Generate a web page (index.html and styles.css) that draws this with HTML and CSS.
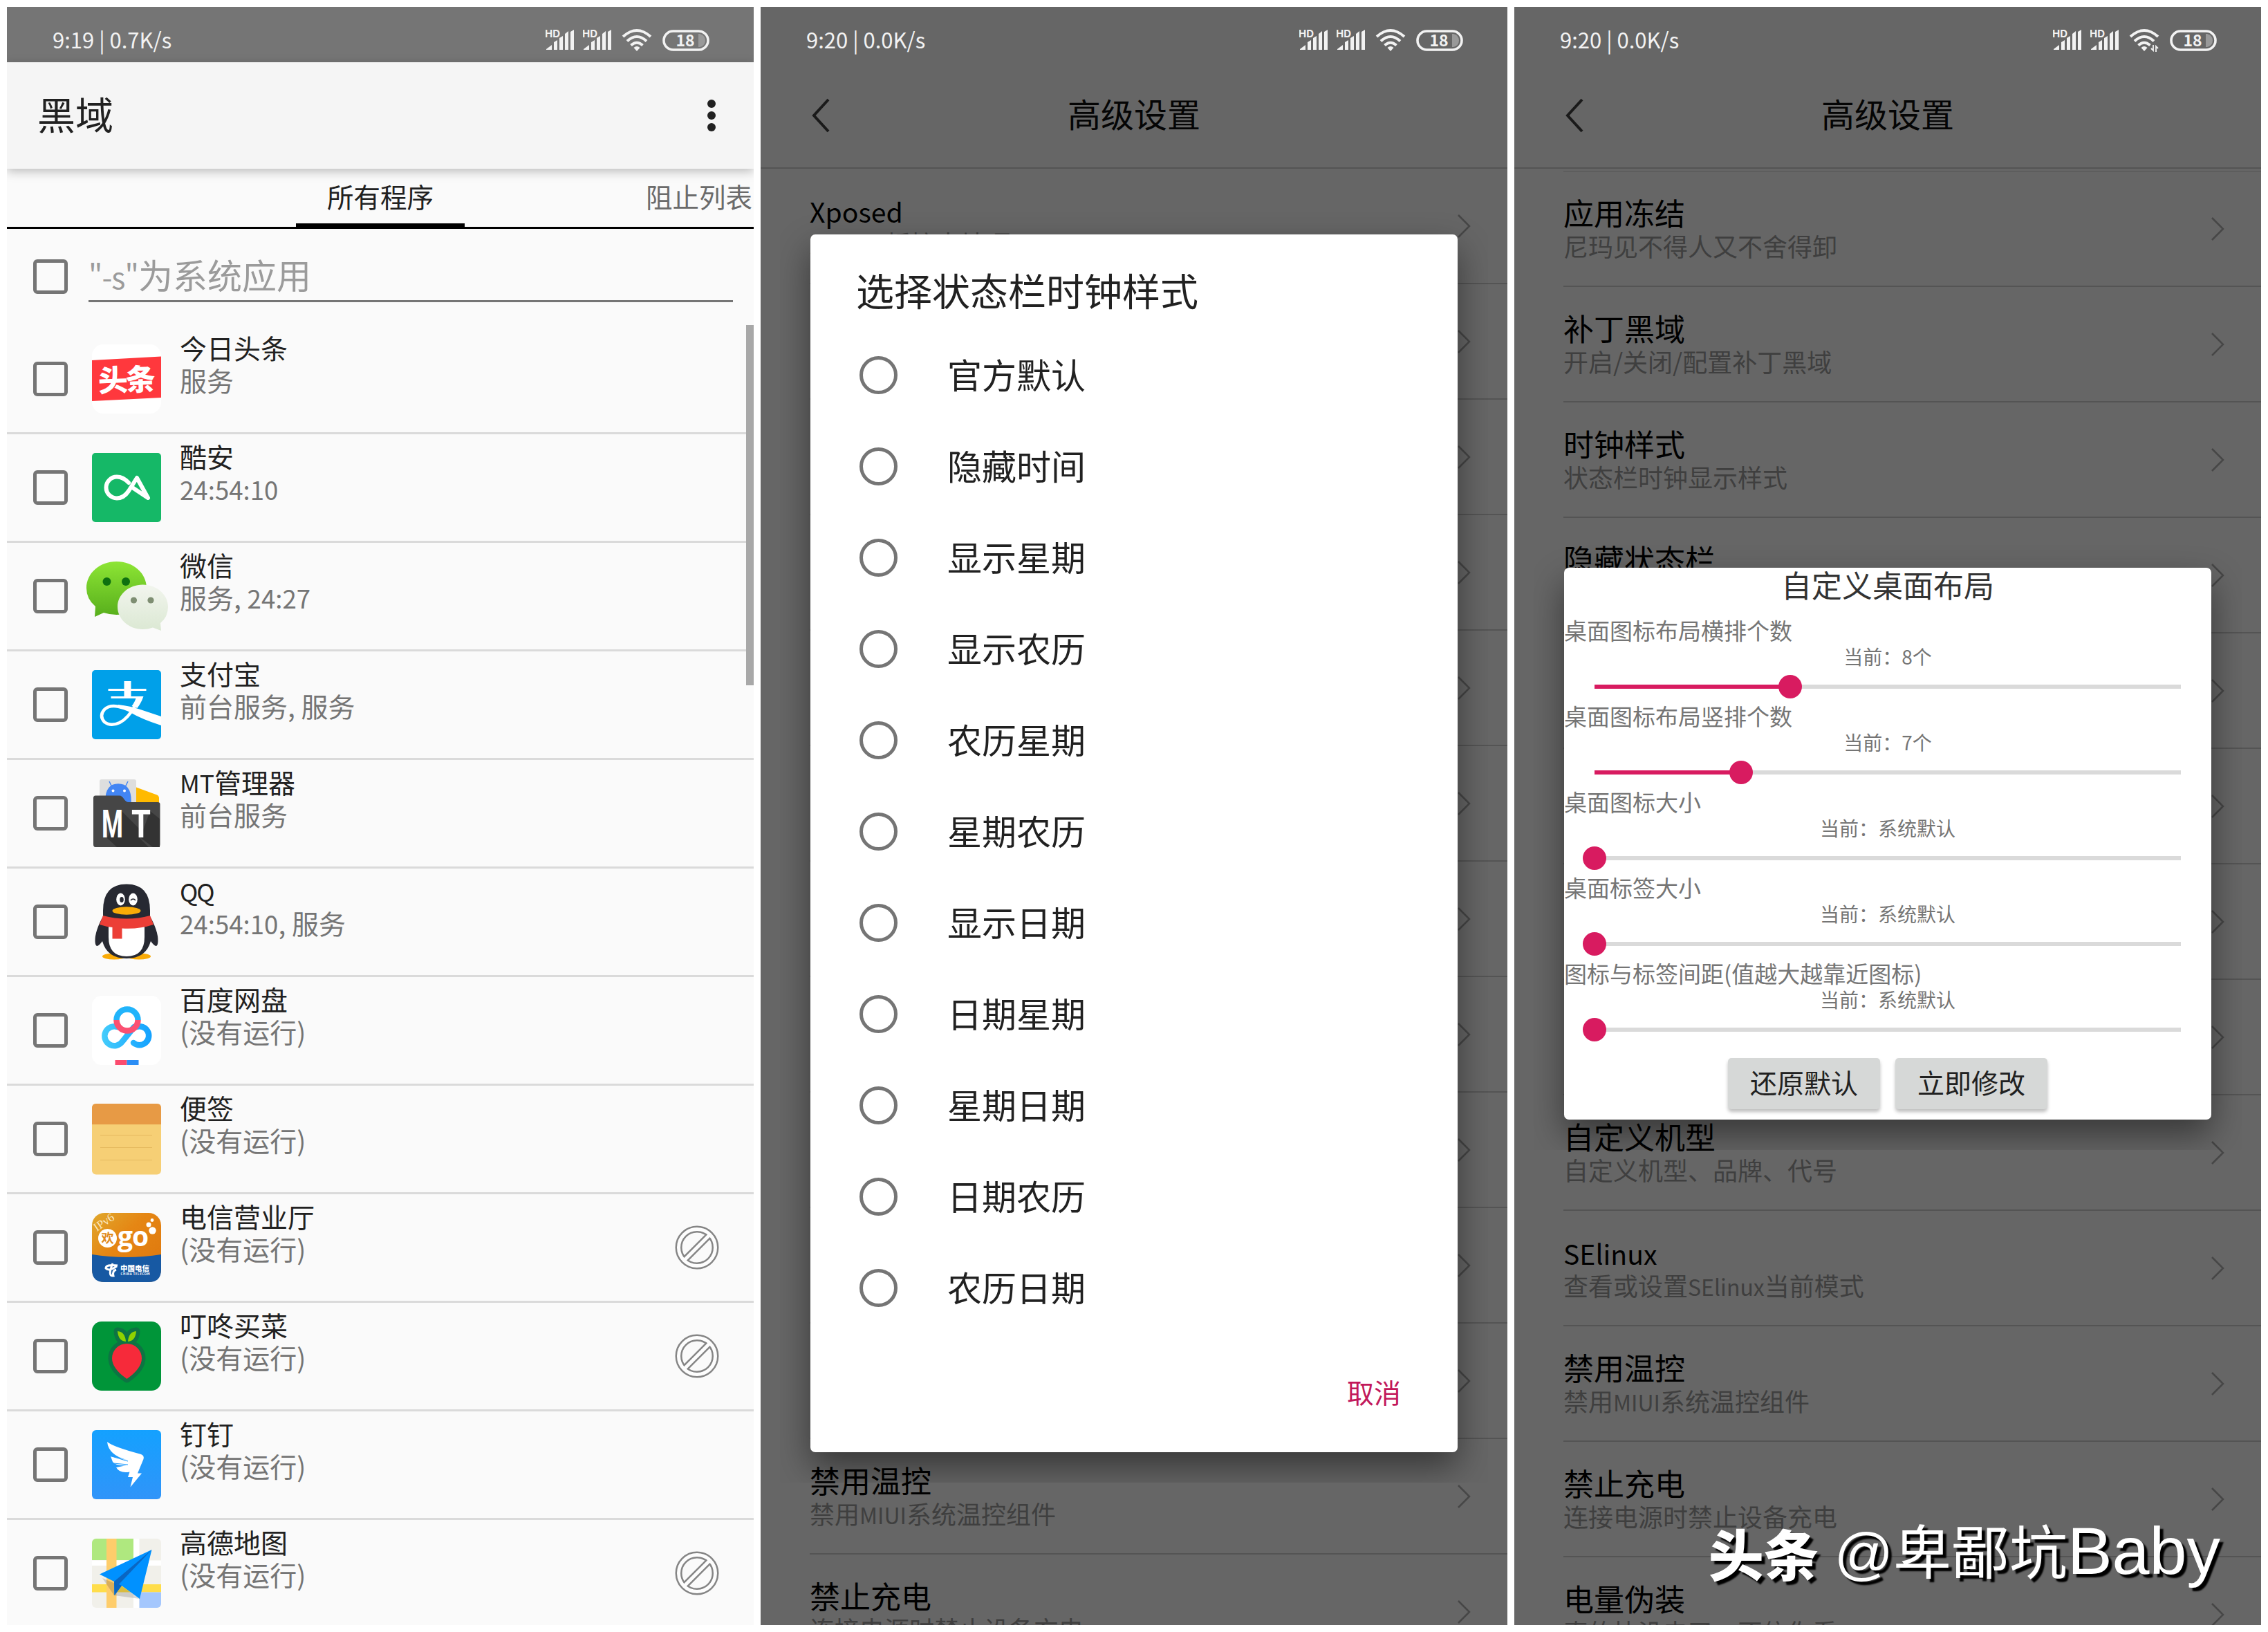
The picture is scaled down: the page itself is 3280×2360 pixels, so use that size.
FILE: index.html
```html
<!DOCTYPE html>
<html lang="zh-CN">
<head>
  <meta charset="UTF-8">
  <meta name="viewport" content="width=device-width, initial-scale=1.0">
  <title>黑域</title>
  <link rel="stylesheet" href="styles.css">
</head>
<body>
  <svg class="defs" width="0" height="0">
    <defs>
      <linearGradient id="gWechat" x1="0" y1="0" x2="0" y2="1"><stop offset="0" stop-color="#8de534"/><stop offset="1" stop-color="#57ae1c"/></linearGradient>
      <linearGradient id="gWechat2" x1="0" y1="0" x2="0" y2="1"><stop offset="0" stop-color="#f2f5ee"/><stop offset="1" stop-color="#dbe8d3"/></linearGradient>
      <linearGradient id="gPan" gradientUnits="userSpaceOnUse" x1="13" y1="0" x2="88" y2="0"><stop offset="0" stop-color="#45cdfb"/><stop offset="1" stop-color="#12a0ff"/></linearGradient>
      <linearGradient id="gGo" x1="0" y1="0" x2="1" y2="1"><stop offset="0" stop-color="#e0a82c"/><stop offset=".4" stop-color="#e58614"/><stop offset="1" stop-color="#dd750c"/></linearGradient>
      <linearGradient id="gDing" x1="0" y1="0" x2="0" y2="1"><stop offset="0" stop-color="#14a1ff"/><stop offset="1" stop-color="#3094f9"/></linearGradient>
    </defs>
    <symbol id="block" viewBox="0 0 64 64">
      <g fill="none" stroke="#858585" stroke-width="10"><circle cx="32" cy="32" r="26.500"/><path d="M14 50L50 14"/></g>
      <g fill="none" stroke="#fdfdfd" stroke-width="5"><circle cx="32" cy="32" r="26.500"/><path d="M14 50L50 14"/></g>
    </symbol>
  </svg>

  <!-- 程序列表 -->
  <div class="phone light">
    <div class="status">
      <span class="clock">9:19 | 0.7K/s</span>
      <div class="status-icons"></div>
    </div>
    <div class="toolbar">
      <h1>黑域</h1>
      <div class="more"><i></i><i></i><i></i></div>
    </div>
    <div class="tabs">
      <span class="tab active">所有程序</span>
      <span class="tab next">阻止列表</span>
    </div>
    <div class="search">
      <i class="check"></i>
      <div class="input"><em>"-s"</em>为系统应用</div>
    </div>
    <ul class="apps">
      <li>
        <i class="check"></i>
        <svg class="icon" viewBox="0 0 100 100">
          <rect width="100" height="100" rx="16" fill="#fff"/>
          <path d="M0 23L100 17.500V77L0 82z" fill="#ff383d"/>
          <text x="9" y="67" class="toutiao" textLength="83" transform="rotate(-2 50 50)">头条</text>
        </svg>
        <div class="info"><b>今日头条</b><span>服务</span></div>
      </li>
      <li>
        <i class="check"></i>
        <svg class="icon" viewBox="0 0 100 100">
          <rect width="100" height="100" rx="5" fill="#15b867"/>
          <path d="M53 43Q45 34.500 36 34.500A15.500 15.500 0 0 0 36 65.500Q46 65.500 53 55L65 36L81 65L60 51" fill="none" stroke="#fff" stroke-width="6" stroke-linejoin="round" stroke-linecap="round"/>
        </svg>
        <div class="info"><b>酷安</b><span><em>24:54:10</em></span></div>
      </li>
      <li>
        <i class="check"></i>
        <svg class="icon" viewBox="0 0 100 100">
          <path d="M35.500 0C60 0 79 17 79 38.500S60 77 35.500 77Q26 77 17 74L4 80L5 65Q-8 54-8 38.500C-8 17 11 0 35.500 0z" fill="url(#gWechat)"/>
          <circle cx="21.500" cy="29" r="6" fill="#0f7010"/><circle cx="49" cy="29" r="6" fill="#0f7010"/>
          <path d="M73.500 33.500C94 33.500 110 48 110 65.500Q110 80 99 89L100 100L88 95.500Q81 98 73.500 98C53 98 37 83 37 65.500S53 33.500 73.500 33.500z" fill="url(#gWechat2)"/>
          <circle cx="60.500" cy="56" r="4.600" fill="#7e8e72"/><circle cx="85" cy="56" r="4.600" fill="#7e8e72"/>
        </svg>
        <div class="info"><b>微信</b><span>服务, <em>24:27</em></span></div>
      </li>
      <li>
        <i class="check"></i>
        <svg class="icon" viewBox="0 0 100 100">
          <rect width="100" height="100" rx="5" fill="#00a0e9"/>
          <path d="M46.500 16h10v11h22v3h-22v8h18q-3 9-9 17l-8-3q4-5 6-11h-36v-3h19v-8h-23v-3h23z" fill="#fff"/>
          <path d="M62 52Q52 70 40 76Q27 82 18 75Q10 66 18 57Q27 48 46 55Q70 64 100 74" fill="none" stroke="#fff" stroke-width="4.500"/>
          <path d="M38 50Q56 52 70 57L100 67V80Q72 71 55 61Q46 55 38 54z" fill="#fff"/>
        </svg>
        <div class="info"><b>支付宝</b><span>前台服务, 服务</span></div>
      </li>
      <li>
        <i class="check"></i>
        <svg class="icon" viewBox="0 0 100 100">
          <rect x="11" y="1" width="53" height="50" rx="3" fill="#dedede"/>
          <path d="M64 12.500L94 23.500Q97 25 97 28V36H64z" fill="#ffba00"/>
          <path d="M20 32Q20 8 38 8T56 32V40H20zM29 12l-4-8M48 12l4-8" fill="#4285f4" stroke="#4285f4" stroke-width="1.500"/>
          <circle cx="30.500" cy="17.500" r="2" fill="#fff"/><circle cx="47" cy="17.500" r="2" fill="#fff"/>
          <path d="M5 24.500H40Q43 24.500 46 29Q49 34 53 34H95Q98.500 34 98.500 37V95Q98.500 99 95 99H5Q2 99 2 95V28Q2 24.500 5 24.500z" fill="#464646"/>
          <path d="M42 46L74 78L68 85L82 99H36L22 86zM84 47L98 58V99H88L70 85z" fill="#333"/>
          <text x="14" y="85" class="mt" textLength="31" lengthAdjust="spacingAndGlyphs">M</text>
          <text x="57" y="85" class="mt" textLength="28" lengthAdjust="spacingAndGlyphs">T</text>
        </svg>
        <div class="info"><b><em>MT</em>管理器</b><span>前台服务</span></div>
      </li>
      <li>
        <i class="check"></i>
        <svg class="icon" viewBox="0 0 100 100">
          <ellipse cx="32" cy="100" rx="17" ry="4.500" fill="#faab07"/><ellipse cx="68" cy="100" rx="17" ry="4.500" fill="#faab07"/>
          <path d="M16 34Q16-4.500 50-4.500T84 34V42Q96 64 95.500 78Q95 92 85 78Q78 103 50 103T15 78Q5 92 4.500 78Q4 64 16 42z" fill="#272932"/>
          <path d="M24 55H76V72Q76 100 50 100T24 72z" fill="#fff"/>
          <ellipse cx="41.500" cy="17.500" rx="6.300" ry="9" fill="#fff"/><ellipse cx="59.500" cy="17.500" rx="6.300" ry="9" fill="#fff"/>
          <ellipse cx="43" cy="18" rx="2.800" ry="4" fill="#272932"/><path d="M56 19q3.500-4 7 0" fill="none" stroke="#272932" stroke-width="1.600"/>
          <ellipse cx="50" cy="34" rx="20.500" ry="5.700" fill="#faab07"/>
          <path d="M16 41Q50 50 84 41L89 54Q68 61 43.500 59.500V74.500H29.500V58Q20 57 11 54z" fill="#ec3e36"/>
        </svg>
        <div class="info"><b><em class="qq">QQ</em></b><span><em>24:54:10</em>, 服务</span></div>
      </li>
      <li>
        <i class="check"></i>
        <svg class="icon" viewBox="0 0 100 100">
          <rect width="100" height="100" rx="14" fill="#fff"/>
          <g fill="none" stroke-width="8.500">
            <path d="M61 45L44 66A14 14 0 1 1 37 45M60 68A13.500 13.500 0 1 0 64 45" stroke="url(#gPan)" stroke-linecap="round"/>
            <path d="M35.500 35A15.500 15.500 0 0 1 66.500 35" stroke="#21b4fb"/>
            <path d="M35.500 35A15.500 15.500 0 1 0 66.500 35" stroke="#fb5072"/>
          </g>
          <path d="M33.500 93h17v7h-17z" fill="#fb4b6e"/><path d="M50.500 93h17v7h-17z" fill="#2a8df5"/>
        </svg>
        <div class="info"><b>百度网盘</b><span>(没有运行)</span></div>
      </li>
      <li>
        <i class="check"></i>
        <svg class="icon" viewBox="0 0 100 100">
          <rect y="-1" width="100" height="102.500" rx="6" fill="#f6cf75"/>
          <path d="M0 29V5Q0-1 6-1H94Q100-1 100 5V29z" fill="#e79a45"/>
          <path d="M12 44.500h75M12 62.500h75M12 80.500h75" stroke="#e5b95e" stroke-width="1.200"/>
        </svg>
        <div class="info"><b>便签</b><span>(没有运行)</span></div>
      </li>
      <li>
        <i class="check"></i>
        <svg class="icon" viewBox="0 0 100 100">
          <rect width="100" height="100" rx="18" fill="url(#gGo)"/>
          <path d="M0 60Q50 68 100 60V82Q100 100 82 100H18Q0 100 0 82z" fill="#1759a3"/>
          <text x="7" y="27" class="ipv" transform="rotate(-34 7 27)">IPv6</text>
          <circle cx="22.500" cy="36.500" r="13.500" fill="#fff"/>
          <text x="13.500" y="43" class="huan">欢</text>
          <text x="37" y="48" class="go">go</text>
          <circle cx="87.500" cy="25.500" r="5.200" fill="#fff"/><circle cx="82" cy="17" r="3.500" fill="#fff"/><circle cx="87" cy="10.500" r="2.400" fill="#fff"/>
          <path d="M37 76Q20 74 20 80Q24 85 36 77M30 73Q22 92 31 91Q29 84 35 82" fill="none" stroke="#fff" stroke-width="3"/>
          <text x="41" y="84" class="tele">中国电信</text>
          <text x="41.500" y="90" class="tele-en" textLength="42">CHINA TELECOM</text>
        </svg>
        <div class="info"><b>电信营业厅</b><span>(没有运行)</span></div>
        <svg class="block"><use href="#block"/></svg>
      </li>
      <li>
        <i class="check"></i>
        <svg class="icon" viewBox="0 0 100 100">
          <rect width="100" height="100" rx="14" fill="#009539"/>
          <g stroke="#0d7443" stroke-width="11" stroke-linejoin="round" fill="#0d7443">
            <path d="M50.500 83Q29 68 29 53A21.500 21 0 0 1 72 53Q72 68 50.500 83z"/>
            <path d="M49 29Q38 28 37 14Q48 15 49 29zM52 29Q53 15 64 14Q63 28 52 29z"/>
          </g>
          <path d="M50.500 83Q29 68 29 53A21.500 21 0 0 1 72 53Q72 68 50.500 83z" fill="#f62a3a"/>
          <path d="M49 29Q38 28 37 14Q48 15 49 29zM52 29Q53 15 64 14Q63 28 52 29z" fill="#8fd300"/>
        </svg>
        <div class="info"><b>叮咚买菜</b><span>(没有运行)</span></div>
        <svg class="block"><use href="#block"/></svg>
      </li>
      <li>
        <i class="check"></i>
        <svg class="icon" viewBox="0 0 100 100">
          <rect width="100" height="100" rx="6" fill="url(#gDing)"/>
          <path d="M22 17Q30 24 71 35Q76 37 74.500 42L66 62.500H72L55.500 82.500L59 68H52L54.500 60.500Q40 63 35 54L50 51Q34 52 30 46L27 38L50 43Q24 36 22 17z" fill="#fff"/>
          <path d="M27 37.500L52 45M31 48L52 50" stroke="#1f9bfc" stroke-width="1.200"/>
        </svg>
        <div class="info"><b>钉钉</b><span>(没有运行)</span></div>
      </li>
      <li>
        <i class="check"></i>
        <svg class="icon map" viewBox="0 0 100 100">
          <rect width="100" height="100" fill="#f1f0ea"/>
          <path d="M0 0h60v31H0z" fill="#afe87f"/>
          <path d="M0 31.500h100v7.500H0zM60 0h8.500v100H60z" fill="#fff"/>
          <path d="M0 66h100v11.500H0z" fill="#ffdd4a"/>
          <path d="M68.500 77.500H100V100H68.500z" fill="#a4c7fd"/>
          <path d="M21 0h14.500v100H21z" fill="#fecd6b"/>
          <path d="M15 57L32 82L69 87L45 70z" fill="#000" opacity=".15"/>
          <path d="M86.500 16L11 51.500L32 62L32.500 82L43 68L69 87z" fill="#0091ff"/>
          <path d="M86.500 16L32 62L39 66zM32 62L32.500 82L43 68L37 65z" fill="#0a66c2"/>
        </svg>
        <div class="info"><b>高德地图</b><span>(没有运行)</span></div>
        <svg class="block"><use href="#block"/></svg>
      </li>
    </ul>
    <div class="scrollbar"></div>
  </div>

  <!-- 时钟样式 -->
  <div class="phone dim">
    <div class="status">
      <span class="clock">9:20 | 0.0K/s</span>
      <div class="status-icons"></div>
    </div>
    <div class="header">
      <svg class="back" viewBox="0 0 28 50"><path d="M25 2L4 25L25 48"/></svg>
      <h2>高级设置</h2>
    </div>
    <ul class="settings" id="settings1"></ul>
    <div class="dialog clock-dialog">
      <h3>选择状态栏时钟样式</h3>
      <ul id="options"></ul>
      <div class="cancel">取消</div>
    </div>
  </div>

  <!-- 桌面布局 -->
  <div class="phone dim">
    <div class="status">
      <span class="clock">9:20 | 0.0K/s</span>
      <div class="status-icons transfer"></div>
    </div>
    <div class="header">
      <svg class="back" viewBox="0 0 28 50"><path d="M25 2L4 25L25 48"/></svg>
      <h2>高级设置</h2>
    </div>
    <ul class="settings scrolled" id="settings2"></ul>
    <div class="dialog layout-dialog">
      <h3>自定义桌面布局</h3>
      <div id="sliders"></div>
      <div class="buttons"><span>还原默认</span><span>立即修改</span></div>
    </div>
    <div class="watermark"><b>头条</b><span>@卑鄙坑<em>Baby</em></span></div>
  </div>

  <script>
    const blank = ["", ""]
    const first = [
      ["Xposed", "Xposed桥接本地项"],
      blank, blank, blank, blank, blank, blank, blank, blank, blank, blank,
      ["禁用温控", "禁用MIUI系统温控组件"],
      ["禁止充电", "连接电源时禁止设备充电"]
    ]
    const second = [
      ["应用冻结", "尼玛见不得人又不舍得卸"],
      ["补丁黑域", "开启/关闭/配置补丁黑域"],
      ["时钟样式", "状态栏时钟显示样式"],
      ["隐藏状态栏", ""],
      blank, blank, blank, blank,
      ["自定义机型", "自定义机型、品牌、代号"],
      ["SElinux", "查看或设置SElinux当前模式"],
      ["禁用温控", "禁用MIUI系统温控组件"],
      ["禁止充电", "连接电源时禁止设备充电"],
      ["电量伪装", "真的快没电了，不信你看"]
    ]
    const options = ["官方默认", "隐藏时间", "显示星期", "显示农历", "农历星期", "星期农历", "显示日期", "日期星期", "星期日期", "日期农历", "农历日期"]
    const sliders = [
      ["桌面图标布局横排个数", "8个", 33.33],
      ["桌面图标布局竖排个数", "7个", 25],
      ["桌面图标大小", "系统默认", 0],
      ["桌面标签大小", "系统默认", 0],
      ["图标与标签间距(值越大越靠近图标)", "系统默认", 0]
    ]

    const signal = `
      <svg class="signal" viewBox="0 0 42 34">
        <text x="-1" y="12.5" class="hd">HD</text>
        <path d="M1 31v-1l8-6v7zM12 31V20l5-3v14zM20 31V14l5-3v20zM28 31V8l5-4v27zM36 31V5l5-3v29z"/>
      </svg>`
    const arrows = `
      <path d="M32 22h12v12H29z" fill="#666"/>
      <path d="M35 24v8l-3-3M39 34v-8l3 3" fill="none" stroke="#f2f2f2" stroke-width="1.8"/>`

    document.querySelectorAll(".status-icons").forEach(element => {
      element.innerHTML = signal + signal + `
        <svg class="wifi" viewBox="0 0 44 34">
          <path d="M2 12Q22-6 42 12M8 18.500Q22 5.500 36 18.500M13.500 24.500Q22 17 30.500 24.500" fill="none" stroke="#f2f2f2" stroke-width="4"/>
          <path d="M17.500 28q4.500-4 9 0l-4.500 5z"/>
          ${element.classList.contains("transfer") ? arrows : ""}
        </svg>
        <svg class="battery" viewBox="0 0 70 32">
          <rect x="3" y="3" width="64" height="27" rx="13.500" fill="none" stroke="#f2f2f2" stroke-width="3.600"/>
          <path d="M53 7h2q8 2 8 9.500t-8 9.500h-2z" fill="#999"/>
          <text x="34" y="24.500" class="level">18</text>
        </svg>`
    })

    // latin runs are set a little smaller than the han characters
    const latin = text => text.replace(/[A-Za-z]+/g, "<em>$&</em>")

    const renderSettings = (id, rows) => {
      document.getElementById(id).innerHTML = rows.map(([title, desc]) => `
        <li>
          <div class="text"><b>${latin(title)}</b><span>${latin(desc)}</span></div>
          <svg class="arrow" viewBox="0 0 20 36"><path d="M2 2L18 18L2 34"/></svg>
        </li>`).join("")
    }
    renderSettings("settings1", first)
    renderSettings("settings2", second)

    document.getElementById("options").innerHTML = options.map(name => `<li><i></i><span>${name}</span></li>`).join("")

    document.getElementById("sliders").innerHTML = sliders.map(([label, value, percent]) => `
      <div class="slider">
        <div class="label">${label}</div>
        <div class="value">当前：${value}</div>
        <div class="track"><div class="fill" style="width: ${percent}%"></div><i class="thumb"></i></div>
      </div>`).join("")
  </script>
</body>
</html>
```

FILE: styles.css
```css
* {
  margin: 0;
  padding: 0;
  box-sizing: border-box;
}
li {
  list-style: none;
}
i {
  display: block;
}
h1, h2, h3, b {
  font-weight: 400;
}
em {
  font-style: normal;
  font-size: 0.91em;
  line-height: 1;
}
body {
  width: 3280px;
  height: 2360px;
  padding: 10px;
  display: flex;
  gap: 10px;
  background: #fff;
  font-family: "Noto Sans CJK SC", "Noto Sans", sans-serif;
  overflow: hidden;
}
.defs {
  position: absolute;
}
.phone {
  position: relative;
  width: 1080px;
  height: 2340px;
  overflow: hidden;
  display: flex;
  flex-direction: column;
  flex-shrink: 0;
}
.light {
  background: #fafafa;
}
.dim {
  background: #666;
}

/* status bar */
.status {
  height: 80px;
  flex-shrink: 0;
  padding: 16px 63px 0 66px;
  display: flex;
  align-items: center;
}
.light .status {
  background: #757575;
}
.clock {
  flex: 1;
  font-size: 31px;
  line-height: 40px;
  color: #f2f2f2;
  white-space: nowrap;
  margin-top: -2px;
}
.status-icons {
  display: flex;
  align-items: center;
}
.status-icons svg {
  fill: #f2f2f2;
}
.signal {
  width: 42px;
  height: 34px;
  margin-right: 12px;
}
.wifi {
  width: 44px;
  height: 34px;
  margin: 0 14px 0 2px;
}
.battery {
  width: 70px;
  height: 32px;
}
.hd {
  font: 700 15px Inter, sans-serif;
}
.level {
  font: 700 23px "Noto Sans CJK SC", sans-serif;
  text-anchor: middle;
}

/* app list */
.toolbar {
  position: relative;
  height: 154px;
  flex-shrink: 0;
  padding: 0 45px 0 44px;
  display: flex;
  align-items: center;
  justify-content: space-between;
  background: #f5f5f5;
  box-shadow: 0 4px 14px rgba(0, 0, 0, 0.25);
}
.toolbar h1 {
  font-size: 55px;
  line-height: 70px;
  color: #212121;
  margin-top: -8px;
}
.more {
  display: flex;
  flex-direction: column;
  gap: 5px;
  margin-right: 10px;
}
.more i {
  width: 12px;
  height: 12px;
  border-radius: 50%;
  background: #212121;
}
.tabs {
  height: 87px;
  flex-shrink: 0;
  display: flex;
  border-bottom: 3px solid #000;
  padding-left: 418px;
  font-size: 38.500px;
  line-height: 79px;
  white-space: nowrap;
}
.tab.active {
  width: 244px;
  height: 84px;
  text-align: center;
  border-bottom: 5px solid #000;
  color: #212121;
}
.tab.next {
  color: #6b6b6b;
  margin-left: 262px;
}
.search {
  height: 140px;
  flex-shrink: 0;
  padding: 0 30px 0 38px;
  display: flex;
}
.search .check {
  margin: 44px 30px 0 0;
}
.input {
  flex: 1;
  height: 106px;
  border-bottom: 3px solid #757575;
  font-size: 50px;
  line-height: 130px;
  color: #9b9b9b;
}
.input em {
  font-size: 0.86em;
  letter-spacing: -1px;
}
.check {
  width: 50px;
  height: 50px;
  flex-shrink: 0;
  border: 5px solid #757575;
  border-radius: 6px;
}
.apps li {
  height: 157px;
  padding: 0 50px 0 38px;
  display: flex;
  align-items: center;
  border-bottom: 3px solid #dadada;
}
.icon {
  width: 100px;
  height: 100px;
  margin: 0 27px 0 35px;
  overflow: visible;
}
.map {
  border-radius: 6px;
  overflow: hidden;
}
.info {
  flex: 1;
  align-self: flex-start;
  padding-top: 8px;
  display: flex;
  flex-direction: column;
  font-size: 39px;
  line-height: 46.500px;
}
.info b {
  color: #212121;
}
.info span {
  color: #757575;
}
.info span em {
  font-size: 0.94em;
}
.info .qq {
  letter-spacing: -2px;
}
.block {
  width: 64px;
  height: 64px;
}
.scrollbar {
  position: absolute;
  right: 0;
  top: 460px;
  width: 11px;
  height: 521px;
  background: #a8a8a8;
}
.toutiao {
  font-size: 43px;
  font-weight: 900;
  fill: #fff;
}
.mt {
  font: 700 56px Roboto, sans-serif;
  fill: #fff;
}
.ipv {
  font: 17px "Liberation Serif", serif;
  fill: #fbe9c0;
}
.huan {
  font-size: 18px;
  font-weight: 700;
  fill: #e08a1c;
}
.go {
  font: 700 39px "Open Sans", sans-serif;
  letter-spacing: -1px;
  fill: #fff;
}
.tele {
  font-size: 10.500px;
  font-weight: 900;
  fill: #fff;
}
.tele-en {
  font-size: 4.500px;
  font-weight: 700;
  fill: #fff;
}

/* settings */
.header {
  position: relative;
  height: 154px;
  flex-shrink: 0;
  display: flex;
  align-items: center;
  justify-content: center;
  border-bottom: 2px solid #545454;
}
.header h2 {
  font-size: 48px;
  line-height: 60px;
  color: #050505;
  margin-top: -7px;
}
.back {
  position: absolute;
  left: 73px;
  top: 52px;
  width: 28px;
  height: 50px;
  fill: none;
  stroke: #1a1a1a;
  stroke-width: 4;
}
.settings {
  flex: 1;
  min-height: 0;
  padding-left: 71px;
}
.settings.scrolled {
  padding-top: 3px;
}
.scrolled::before {
  content: "";
  display: block;
  height: 1px;
  background: #545454;
}
.settings li {
  height: 167px;
  padding-right: 53px;
  display: flex;
  align-items: center;
  justify-content: space-between;
  border-bottom: 2px solid #545454;
}
.text {
  align-self: flex-start;
  padding-top: 33px;
  display: flex;
  flex-direction: column;
  white-space: nowrap;
}
.text b {
  font-size: 44px;
  line-height: 52px;
  height: 52px;
  color: #000;
}
.text span {
  font-size: 36px;
  line-height: 44px;
  color: #3f3f3f;
}
.text em {
  font-size: 0.89em;
}
.arrow {
  width: 20px;
  height: 36px;
  fill: none;
  stroke: #474747;
  stroke-width: 2.500;
}

/* dialogs */
.dialog {
  position: absolute;
  left: 72px;
  width: 936px;
  border-radius: 7px;
  background: #fff;
  box-shadow: 0 22px 50px rgba(0, 0, 0, 0.45);
  clip-path: inset(-44px);
}
.clock-dialog {
  top: 329px;
  height: 1761px;
  padding: 45px 0 0 66px;
  color: #212121;
}
.clock-dialog h3 {
  font-size: 55px;
  line-height: 68px;
  margin-bottom: 24px;
}
.clock-dialog li {
  height: 132px;
  display: flex;
  align-items: center;
  font-size: 50px;
  line-height: 66px;
}
.clock-dialog li i {
  width: 55px;
  height: 55px;
  margin: 0 72px 0 5px;
  border: 5px solid #757575;
  border-radius: 50%;
}
.clock-dialog li span {
  margin-top: -5px;
}
.cancel {
  margin: 54px 82px 0 0;
  text-align: right;
  font-size: 39px;
  line-height: 60px;
  color: #c2185b;
}
.layout-dialog {
  top: 811px;
  height: 798px;
}
.layout-dialog h3 {
  height: 74px;
  font-size: 44px;
  line-height: 48px;
  text-align: center;
  color: #333;
}
.slider {
  height: 124px;
  color: #757575;
}
.label {
  font-size: 33px;
  line-height: 33px;
}
.value {
  font-size: 28px;
  line-height: 42px;
  text-align: center;
}
.track {
  display: flex;
  align-items: center;
  height: 36px;
  margin: 5px 44px 0;
  background: linear-gradient(#dadada, #dadada) center / 100% 6px no-repeat;
}
.fill {
  height: 6px;
  background: #d81b60;
}
.thumb {
  width: 34px;
  height: 34px;
  margin-left: -17px;
  border-radius: 50%;
  background: #d81b60;
}
.buttons {
  display: flex;
  justify-content: center;
  gap: 22px;
  padding-top: 15px;
}
.buttons span {
  width: 220px;
  height: 74px;
  border-radius: 5px;
  text-align: center;
  font-size: 39px;
  line-height: 68px;
  color: #212121;
  background: #d6d8d7;
  box-shadow: 0 4px 5px rgba(0, 0, 0, 0.25);
}
.watermark {
  position: absolute;
  right: 59px;
  bottom: 48px;
  display: flex;
  align-items: center;
  gap: 22px;
  font-size: 84px;
  line-height: 110px;
  color: #fff;
  white-space: nowrap;
  text-shadow: 5px 5px 2px #000;
}
.watermark b {
  font-weight: 900;
  font-size: 80px;
  margin-top: -6px;
}
.watermark span {
  font-family: "Liberation Sans", "Noto Sans CJK SC", sans-serif;
}
.watermark em {
  font-size: 97px;
}
```
